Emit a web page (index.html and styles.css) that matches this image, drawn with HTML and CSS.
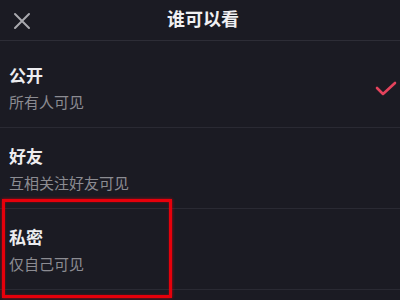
FILE: index.html
```html
<!DOCTYPE html>
<html lang="zh">
<head>
<meta charset="utf-8">
<link rel="stylesheet" href="styles.css">
</head>
<body>
<div class="screen">
  <header class="topbar">
    <div class="close">
      <svg width="18" height="18" viewBox="0 0 18 18"><path d="M2 2 L16 16 M16 2 L2 16" stroke="#a9a9ae" stroke-width="2" stroke-linecap="round" fill="none"/></svg>
    </div>
    <div class="title">谁可以看</div>
    <div class="spacer"></div>
  </header>
  <div class="list">
    <div class="row">
      <div class="texts">
        <div class="name">公开</div>
        <div class="desc">所有人可见</div>
      </div>
      <svg class="check" width="22" height="16" viewBox="0 0 22 16"><path d="M2 7 L8 13 L20 2" stroke="#e4435c" stroke-width="2.6" stroke-linecap="round" stroke-linejoin="round" fill="none"/></svg>
    </div>
    <div class="row">
      <div class="texts">
        <div class="name">好友</div>
        <div class="desc">互相关注好友可见</div>
      </div>
    </div>
    <div class="row">
      <div class="texts">
        <div class="name">私密</div>
        <div class="desc">仅自己可见</div>
      </div>
    </div>
  </div>
  <div class="highlight"></div>
</div>
</body>
</html>
```
FILE: styles.css
```css
html, body {
  margin: 0;
  padding: 0;
  background: #1b1b23;
}
.screen {
  position: relative;
  width: 400px;
  height: 300px;
  overflow: hidden;
  background: #1b1b23;
  font-family: "Noto Sans CJK SC", "Noto Sans", sans-serif;
}
.topbar {
  height: 40px;
  border-bottom: 1px solid #2d2d36;
  display: grid;
  grid-template-columns: 44px 1fr 44px;
  align-items: center;
}
.close {
  display: flex;
  align-items: center;
  padding-left: 13px;
  padding-top: 1px;
}
.title {
  text-align: center;
  color: #f0f0f2;
  font-size: 18px;
  font-weight: 700;
  line-height: 20px;
  padding-left: 6px;
  padding-bottom: 5px;
}
.list {
  padding-top: 6px;
}
.row {
  height: 80px;
  border-bottom: 1px solid #2a2a33;
  display: flex;
  align-items: center;
  padding-left: 9px;
  padding-right: 3px;
}
.texts {
  flex: 1;
  display: flex;
  flex-direction: column;
  gap: 7px;
  padding-top: 2px;
}
.name {
  color: #ededf0;
  font-size: 17px;
  font-weight: 700;
  line-height: 20px;
}
.desc {
  color: #8c8c92;
  font-size: 15px;
  line-height: 20px;
}
.check {
  margin-top: 4px;
}
.highlight {
  position: absolute;
  left: 2px;
  top: 199px;
  width: 164px;
  height: 93px;
  border: 3px solid #e6000b;
  box-shadow: 0 0 3px rgba(230, 0, 11, 0.7), inset 0 0 2px rgba(230, 0, 11, 0.6);
}
```
